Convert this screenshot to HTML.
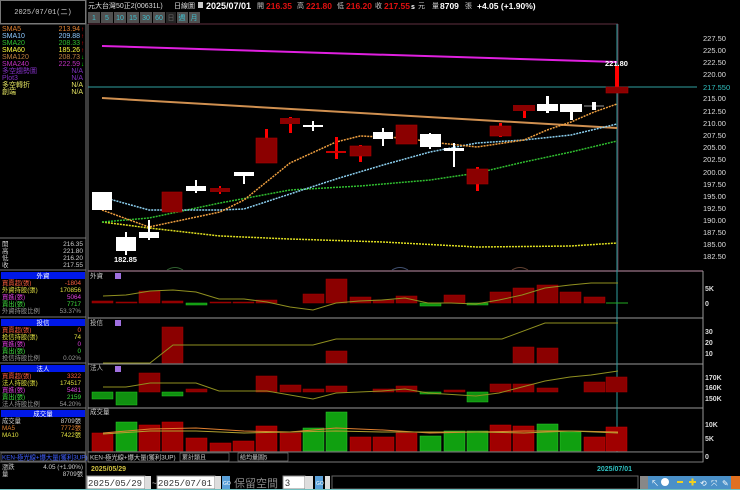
<!DOCTYPE html><html><head><meta charset="utf-8"><style>
body{margin:0;background:#000;width:740px;height:490px;overflow:hidden}
svg{display:block}
text{font-family:"Liberation Sans","Noto Sans CJK TC",sans-serif}
.s{font-size:7px}
.m{font-family:"Liberation Mono","Noto Sans CJK TC",monospace}
</style></head><body>
<svg width="740" height="490" viewBox="0 0 740 490" xmlns="http://www.w3.org/2000/svg">
<rect width="740" height="490" fill="#000"/>
<!-- left panel -->
<rect x="0.5" y="0.5" width="85" height="23" fill="#000" stroke="#777"/>
<text x="43" y="14" fill="#ccc" font-size="7" text-anchor="middle" class="m">2025/07/01(二)</text>
<line x1="86" y1="0" x2="86" y2="490" stroke="#777"/>
<line x1="0" y1="24" x2="86" y2="24" stroke="#777"/>
<g class="s m" font-size="6.5">
<text x="2" y="31" fill="#e08030">SMA5</text><text x="80" y="31" fill="#e08030" text-anchor="end">213.94</text>
<text x="2" y="38" fill="#8cc8ff">SMA10</text><text x="80" y="38" fill="#8cc8ff" text-anchor="end">209.88</text>
<text x="2" y="45" fill="#30c030">SMA20</text><text x="80" y="45" fill="#30c030" text-anchor="end">208.33</text>
<text x="2" y="52" fill="#ffff40">SMA60</text><text x="80" y="52" fill="#ffff40" text-anchor="end">185.26</text>
<text x="2" y="59" fill="#c08040">SMA120</text><text x="80" y="59" fill="#c08040" text-anchor="end">208.73</text>
<text x="2" y="66" fill="#c030c0">SMA240</text><text x="80" y="66" fill="#c030c0" text-anchor="end">222.59</text>
<text x="2" y="73" fill="#8030c0">多空趨勢圖</text><text x="83" y="73" fill="#8030c0" text-anchor="end">N/A</text>
<text x="2" y="80" fill="#8030c0">Plot3</text><text x="83" y="80" fill="#8030c0" text-anchor="end">N/A</text>
<text x="2" y="87" fill="#e0e060">多空轉折</text><text x="83" y="87" fill="#e0e060" text-anchor="end">N/A</text>
<text x="2" y="94" fill="#e0e060">創端</text><text x="83" y="94" fill="#e0e060" text-anchor="end">N/A</text>
</g>
<g fill="#f00" font-size="6"><text x="81" y="31">↑</text><text x="81" y="38">↑</text><text x="81" y="45">↑</text><text x="81" y="52">↑</text></g>
<g fill="#0f0" font-size="6"><text x="81" y="59">↓</text><text x="81" y="66">↓</text></g>
<line x1="0" y1="238" x2="86" y2="238" stroke="#777"/>
<g class="m" font-size="6.5" fill="#ccc">
<text x="2" y="246">開</text><text x="83" y="246" text-anchor="end">216.35</text>
<text x="2" y="253">高</text><text x="83" y="253" text-anchor="end">221.80</text>
<text x="2" y="260">低</text><text x="83" y="260" text-anchor="end">216.20</text>
<text x="2" y="267">收</text><text x="83" y="267" text-anchor="end">217.55</text>
</g>
<line x1="0" y1="270" x2="86" y2="270" stroke="#777"/>
<!-- 外資 -->
<rect x="1" y="272" width="84" height="7" fill="#0018e8"/><text x="43" y="278" fill="#fff" font-size="6.5" text-anchor="middle">外資</text>
<g class="m" font-size="6.3">
<text x="2" y="285" fill="#ff6040">買賣超(張)</text><text x="81" y="285" fill="#ff6040" text-anchor="end">-1804</text>
<text x="2" y="292" fill="#e0e040">外資持股(張)</text><text x="81" y="292" fill="#e0e040" text-anchor="end">170856</text>
<text x="2" y="299" fill="#e040e0">買進(張)</text><text x="81" y="299" fill="#e040e0" text-anchor="end">5064</text>
<text x="2" y="306" fill="#40e040">賣出(張)</text><text x="81" y="306" fill="#40e040" text-anchor="end">7717</text>
<text x="2" y="313" fill="#999">外資持股比例</text><text x="81" y="313" fill="#999" text-anchor="end">53.37%</text>
</g>
<line x1="0" y1="317" x2="86" y2="317" stroke="#777"/>
<rect x="1" y="319" width="84" height="7" fill="#0018e8"/><text x="43" y="325" fill="#fff" font-size="6.5" text-anchor="middle">投信</text>
<g class="m" font-size="6.3">
<text x="2" y="332" fill="#ff6040">買賣超(張)</text><text x="81" y="332" fill="#ff6040" text-anchor="end">0</text>
<text x="2" y="339" fill="#e0e040">投信持股(張)</text><text x="81" y="339" fill="#e0e040" text-anchor="end">74</text>
<text x="2" y="346" fill="#e040e0">買進(張)</text><text x="81" y="346" fill="#e040e0" text-anchor="end">0</text>
<text x="2" y="353" fill="#40e040">賣出(張)</text><text x="81" y="353" fill="#40e040" text-anchor="end">0</text>
<text x="2" y="360" fill="#999">投信持股比例</text><text x="81" y="360" fill="#999" text-anchor="end">0.02%</text>
</g>
<line x1="0" y1="363" x2="86" y2="363" stroke="#777"/>
<rect x="1" y="365" width="84" height="7" fill="#0018e8"/><text x="43" y="371" fill="#fff" font-size="6.5" text-anchor="middle">法人</text>
<g class="m" font-size="6.3">
<text x="2" y="378" fill="#ff6040">買賣超(張)</text><text x="81" y="378" fill="#ff6040" text-anchor="end">3322</text>
<text x="2" y="385" fill="#e0e040">法人持股(張)</text><text x="81" y="385" fill="#e0e040" text-anchor="end">174517</text>
<text x="2" y="392" fill="#e040e0">買進(張)</text><text x="81" y="392" fill="#e040e0" text-anchor="end">5481</text>
<text x="2" y="399" fill="#40e040">賣出(張)</text><text x="81" y="399" fill="#40e040" text-anchor="end">2159</text>
<text x="2" y="406" fill="#999">法人持股比例</text><text x="81" y="406" fill="#999" text-anchor="end">54.20%</text>
</g>
<line x1="0" y1="408" x2="86" y2="408" stroke="#777"/>
<rect x="1" y="410" width="84" height="7" fill="#0018e8"/><text x="43" y="416" fill="#fff" font-size="6.5" text-anchor="middle">成交量</text>
<g class="m" font-size="6.3">
<text x="2" y="423" fill="#ccc">成交量</text><text x="81" y="423" fill="#ccc" text-anchor="end">8709張</text>
<text x="2" y="430" fill="#e08030">MA5</text><text x="81" y="430" fill="#e08030" text-anchor="end">7772張</text>
<text x="2" y="437" fill="#e0e040">MA10</text><text x="81" y="437" fill="#e0e040" text-anchor="end">7422張</text>
</g>
<line x1="0" y1="452" x2="86" y2="452" stroke="#777"/>
<rect x="1" y="453" width="84" height="8" fill="#000" stroke="#888" stroke-width="0.6"/>
<text x="2" y="459.5" fill="#4060ff" font-size="6.3">KEN-極光線+爆大量(獲利3UP)</text>
<line x1="0" y1="462" x2="86" y2="462" stroke="#777"/>
<g class="m" font-size="6.3" fill="#ccc">
<text x="2" y="469">漲跌</text><text x="83" y="469" text-anchor="end">4.05 (+1.90%)</text>
<text x="2" y="476">量</text><text x="83" y="476" text-anchor="end">8709張</text>
</g>

<!-- header -->
<g font-size="7">
<text x="88" y="8" fill="#ddd">元大台灣50正2(00631L)</text>
<text x="174" y="8" fill="#ddd">日線圖</text>
<rect x="198" y="2" width="5" height="6" fill="#ccc"/>
<text x="206" y="9" fill="#fff" font-size="9" font-weight="bold">2025/07/01</text>
<text x="257" y="8" fill="#ccc">開</text><text x="266" y="9" fill="#e01010" font-size="8.5" font-weight="bold">216.35</text>
<text x="297" y="8" fill="#ccc">高</text><text x="306" y="9" fill="#e01010" font-size="8.5" font-weight="bold">221.80</text>
<text x="337" y="8" fill="#ccc">低</text><text x="346" y="9" fill="#e01010" font-size="8.5" font-weight="bold">216.20</text>
<text x="375" y="8" fill="#ccc">收</text><text x="384" y="9" fill="#e01010" font-size="8.5" font-weight="bold">217.55</text>
<text x="411" y="9" fill="#fff" font-weight="bold">s</text><text x="418" y="8" fill="#ccc">元</text>
<text x="432" y="8" fill="#ccc">量</text><text x="440" y="9" fill="#fff" font-size="8.5" font-weight="bold">8709</text><text x="465" y="8" fill="#ccc">張</text>
<text x="477" y="9" fill="#fff" font-size="8.5" font-weight="bold">+4.05 (+1.90%)</text>
</g>
<!-- period buttons -->
<g font-size="7" fill="#40c0d0" text-anchor="middle">
<rect x="88" y="12" width="12" height="11" fill="#505050"/><text x="94" y="20">1</text>
<rect x="101" y="12" width="12" height="11" fill="#505050"/><text x="107" y="20">5</text>
<rect x="114" y="12" width="12" height="11" fill="#505050"/><text x="120" y="20">10</text>
<rect x="127" y="12" width="12" height="11" fill="#505050"/><text x="133" y="20">15</text>
<rect x="140" y="12" width="12" height="11" fill="#505050"/><text x="146" y="20">30</text>
<rect x="153" y="12" width="12" height="11" fill="#505050"/><text x="159" y="20">60</text>
<rect x="166" y="12" width="10" height="11" fill="#252525"/><text x="171" y="20" fill="#666">日</text>
<rect x="177" y="12" width="11" height="11" fill="#505050"/><text x="182" y="20">週</text>
<rect x="189" y="12" width="11" height="11" fill="#505050"/><text x="194" y="20">月</text>
</g>

<!-- main chart frame -->
<line x1="88" y1="24" x2="618" y2="24" stroke="#603040"/>
<line x1="88" y1="24" x2="88" y2="452" stroke="#777"/>
<line x1="618" y1="24" x2="618" y2="270" stroke="#603040"/>
<line x1="88" y1="271" x2="703" y2="271" stroke="#806070" stroke-width="1.5"/>
<line x1="88" y1="318" x2="703" y2="318" stroke="#999"/>
<line x1="88" y1="364" x2="703" y2="364" stroke="#999"/>
<line x1="88" y1="408" x2="703" y2="408" stroke="#999"/>
<line x1="88" y1="452" x2="703" y2="452" stroke="#999"/>
<line x1="703" y1="271" x2="703" y2="462" stroke="#999"/>
<line x1="88" y1="87" x2="697" y2="87" stroke="#30a0a0"/>
<line x1="617" y1="24" x2="617" y2="462" stroke="#30a0a0"/>

<!-- price axis -->
<g font-size="7.5" fill="#ddd" class="m">
<text x="703" y="41">227.50</text><text x="703" y="53">225.00</text><text x="703" y="65">222.50</text><text x="703" y="77">220.00</text>
<text x="703" y="101">215.00</text><text x="703" y="114">212.50</text><text x="703" y="126">210.00</text><text x="703" y="138">207.50</text>
<text x="703" y="150">205.00</text><text x="703" y="162">202.50</text><text x="703" y="175">200.00</text><text x="703" y="187">197.50</text>
<text x="703" y="199">195.00</text><text x="703" y="211">192.50</text><text x="703" y="223">190.00</text><text x="703" y="235">187.50</text>
<text x="703" y="247">185.00</text><text x="703" y="259">182.50</text>
<text x="703" y="90" fill="#30c0c0">217.550</text>
</g>

<!-- MA lines -->
<polyline points="102,46 617,62" stroke="#e020e0" stroke-width="2" fill="none"/>
<polyline points="102,98 617,128" stroke="#d09050" stroke-width="2" fill="none"/>
<polyline points="102,222 149,228 220,236 290,239 383,242 477,247 571,246 617,243" stroke="#e0e020" stroke-width="1.5" stroke-dasharray="2,1" fill="none"/>
<polyline points="102,222 149,218 220,203 290,190 360,186 430,180 477,173 524,162 571,152 617,141" stroke="#30c030" stroke-width="1.5" stroke-dasharray="2,1" fill="none"/>
<polyline points="102,197 149,210 220,210 244,209 290,194 336,179 383,165 430,152 477,143 524,140 571,135 617,124" stroke="#8cd0f0" stroke-width="1.5" stroke-dasharray="2,1" fill="none"/>
<polyline points="102,210 149,227 220,212 244,200 290,163 336,142 360,136 406,138 430,142 477,147 524,140 547,130 571,122 594,112 617,104" stroke="#f0a040" stroke-width="1.5" stroke-dasharray="2,1" fill="none"/>

<!-- candles -->
<g>
<rect x="92" y="192" width="20" height="18" fill="#fff"/>
<rect x="125" y="232" width="2" height="23" fill="#fff"/><rect x="116" y="237" width="20" height="14" fill="#fff"/>
<rect x="148" y="220" width="2" height="20" fill="#fff"/><rect x="139" y="232" width="20" height="6" fill="#fff"/>
<rect x="162" y="192" width="20" height="20" fill="#8b0000" stroke="#a00" stroke-width="0.6"/>
<rect x="195" y="180" width="2" height="13" fill="#fff"/><rect x="186" y="186" width="20" height="5" fill="#fff"/>
<rect x="219" y="186" width="2" height="8" fill="#f00"/><rect x="210" y="188" width="20" height="4" fill="#8b0000"/>
<rect x="243" y="172" width="2" height="12" fill="#fff"/><rect x="234" y="172" width="20" height="4" fill="#fff"/>
<rect x="265" y="129" width="3" height="10" fill="#f00"/><rect x="256" y="138" width="21" height="25" fill="#8b0000" stroke="#a00" stroke-width="0.6"/>
<rect x="289" y="117" width="3" height="16" fill="#f00"/><rect x="280" y="118" width="20" height="6" fill="#8b0000"/>
<rect x="312" y="121" width="2" height="10" fill="#fff"/><rect x="303" y="125" width="20" height="2" fill="#fff"/>
<rect x="335" y="137" width="3" height="22" fill="#f00"/><rect x="326" y="151" width="20" height="2" fill="#c00"/>
<rect x="359" y="145" width="3" height="17" fill="#f00"/><rect x="350" y="146" width="21" height="10" fill="#8b0000" stroke="#a00" stroke-width="0.6"/>
<rect x="382" y="128" width="2" height="18" fill="#fff"/><rect x="373" y="132" width="20" height="7" fill="#fff"/>
<rect x="396" y="125" width="21" height="19" fill="#8b0000" stroke="#a00" stroke-width="0.6"/>
<rect x="429" y="133" width="2" height="16" fill="#fff"/><rect x="420" y="134" width="21" height="13" fill="#fff"/>
<rect x="453" y="143" width="2" height="24" fill="#fff"/><rect x="444" y="148" width="20" height="3" fill="#fff"/>
<rect x="476" y="167" width="3" height="24" fill="#f00"/><rect x="467" y="169" width="21" height="15" fill="#8b0000" stroke="#a00" stroke-width="0.6"/>
<rect x="499" y="123" width="3" height="14" fill="#f00"/><rect x="490" y="126" width="21" height="10" fill="#8b0000" stroke="#a00" stroke-width="0.6"/>
<rect x="523" y="105" width="3" height="13" fill="#f00"/><rect x="513" y="105" width="22" height="6" fill="#8b0000"/>
<rect x="546" y="96" width="3" height="17" fill="#fff"/><rect x="537" y="104" width="21" height="7" fill="#fff"/>
<rect x="570" y="104" width="3" height="16" fill="#fff"/><rect x="560" y="104" width="22" height="8" fill="#fff"/>
<line x1="584" y1="106" x2="604" y2="106" stroke="#999"/><rect x="592" y="102" width="4" height="8" fill="#fff"/>
<rect x="615" y="66" width="4" height="22" fill="#f00"/><rect x="606" y="87" width="22" height="6" fill="#8b0000" stroke="#a00" stroke-width="0.6"/>
</g>
<text x="114" y="262" fill="#fff" font-size="7.5" font-weight="bold">182.85</text>
<text x="605" y="66" fill="#fff" font-size="7.5" font-weight="bold">221.80</text>
<g fill="none" stroke-width="1"><path d="M167,270 Q175,265 183,270" stroke="#306030"/><path d="M392,270 Q400,265 408,270" stroke="#405070"/><path d="M512,270 Q520,265 528,270" stroke="#604030"/></g>

<!-- sub panel labels -->
<g font-size="6.5" fill="#ccc">
<text x="90" y="278">外資</text><rect x="115" y="273" width="6" height="6" fill="#a070e0"/>
<text x="90" y="325">投信</text><rect x="115" y="320" width="6" height="6" fill="#a070e0"/>
<text x="90" y="370">法人</text><rect x="115" y="366" width="6" height="6" fill="#a070e0"/>
<text x="90" y="414">成交量</text>
</g>
<!-- 外資 bars base 303 -->
<g fill="#8b0000" stroke="#a00" stroke-width="0.5">
<rect x="92" y="301" width="21" height="2"/><rect x="116" y="302" width="21" height="1"/><rect x="139" y="291" width="21" height="12"/>
<rect x="162" y="301" width="21" height="2"/><rect x="210" y="302" width="21" height="1"/><rect x="233" y="302" width="21" height="1"/>
<rect x="256" y="300" width="21" height="3"/><rect x="303" y="294" width="21" height="9"/><rect x="326" y="279" width="21" height="24"/>
<rect x="350" y="297" width="21" height="6"/><rect x="373" y="300" width="21" height="3"/><rect x="396" y="296" width="21" height="7"/>
<rect x="444" y="295" width="21" height="8"/><rect x="490" y="292" width="21" height="11"/><rect x="513" y="288" width="21" height="15"/>
<rect x="537" y="285" width="21" height="18"/><rect x="560" y="292" width="21" height="11"/><rect x="584" y="297" width="21" height="6"/>
</g>
<g fill="#109010" stroke="#2c2" stroke-width="0.5">
<rect x="186" y="303" width="21" height="2"/><rect x="420" y="303" width="21" height="3"/><rect x="467" y="303" width="21" height="2"/>
</g>
<line x1="606" y1="303" x2="628" y2="303" stroke="#2a2"/>
<polyline points="103,296 126,295 150,291 173,290 196,292 219,299 244,299 267,302 290,307 313,310 336,303 359,301 382,300 405,298 428,303 451,303 476,304 499,300 522,295 545,288 570,285 591,283 618,283" fill="none" stroke="#909020" stroke-width="1"/>
<g font-size="7" fill="#ddd" font-weight="bold"><text x="705" y="291">5K</text><text x="705" y="306">0</text></g>

<!-- 投信 bars base 363 -->
<g fill="#8b0000" stroke="#a00" stroke-width="0.5">
<rect x="162" y="327" width="21" height="36"/><rect x="326" y="351" width="21" height="12"/><rect x="513" y="347" width="21" height="16"/><rect x="537" y="348" width="21" height="15"/>
</g>
<polyline points="103,363 150,363 173,345 313,345 336,339 502,339 545,323 618,323" fill="none" stroke="#909020"/>
<g font-size="7" fill="#ddd" font-weight="bold"><text x="705" y="334">30</text><text x="705" y="345">20</text><text x="705" y="356">10</text></g>

<!-- 法人 bars base 392 -->
<g fill="#8b0000" stroke="#a00" stroke-width="0.5">
<rect x="139" y="373" width="21" height="19"/><rect x="186" y="389" width="21" height="3"/><rect x="256" y="376" width="21" height="16"/>
<rect x="280" y="385" width="21" height="7"/><rect x="303" y="389" width="21" height="3"/><rect x="326" y="386" width="21" height="6"/>
<rect x="373" y="389" width="21" height="3"/><rect x="396" y="386" width="21" height="6"/><rect x="444" y="390" width="21" height="2"/>
<rect x="490" y="384" width="21" height="8"/><rect x="513" y="384" width="21" height="8"/><rect x="537" y="388" width="21" height="4"/>
<rect x="584" y="382" width="21" height="10"/><rect x="606" y="377" width="21" height="15"/>
</g>
<g fill="#109010" stroke="#2c2" stroke-width="0.5">
<rect x="92" y="392" width="21" height="7"/><rect x="116" y="392" width="21" height="13"/><rect x="162" y="392" width="21" height="4"/>
<rect x="420" y="392" width="21" height="2"/><rect x="467" y="392" width="21" height="10"/>
</g>
<polyline points="103,387 126,387 150,383 196,383 219,391 267,391 313,399 336,393 382,391 405,389 428,393 476,396 499,393 522,387 545,381 570,377 591,375 618,371" fill="none" stroke="#909020"/>
<g font-size="7" fill="#ddd" font-weight="bold"><text x="705" y="380">170K</text><text x="705" y="390">160K</text><text x="705" y="401">150K</text></g>

<!-- volume base 451 -->
<g stroke-width="0.5">
<rect x="92" y="433" width="21" height="18" fill="#a00000" stroke="#c00"/>
<rect x="116" y="422" width="21" height="29" fill="#10a010" stroke="#3c3"/>
<rect x="139" y="425" width="21" height="26" fill="#a00000" stroke="#c00"/>
<rect x="162" y="422" width="21" height="29" fill="#a00000" stroke="#c00"/>
<rect x="186" y="438" width="21" height="13" fill="#a00000" stroke="#c00"/>
<rect x="210" y="443" width="21" height="8" fill="#a00000" stroke="#c00"/>
<rect x="233" y="441" width="21" height="10" fill="#a00000" stroke="#c00"/>
<rect x="256" y="426" width="21" height="25" fill="#a00000" stroke="#c00"/>
<rect x="280" y="433" width="21" height="18" fill="#a00000" stroke="#c00"/>
<rect x="303" y="428" width="21" height="23" fill="#10a010" stroke="#3c3"/>
<rect x="326" y="412" width="21" height="39" fill="#10a010" stroke="#3c3"/>
<rect x="350" y="437" width="21" height="14" fill="#a00000" stroke="#c00"/>
<rect x="373" y="437" width="21" height="14" fill="#a00000" stroke="#c00"/>
<rect x="396" y="433" width="21" height="18" fill="#a00000" stroke="#c00"/>
<rect x="420" y="436" width="21" height="15" fill="#10a010" stroke="#3c3"/>
<rect x="444" y="431" width="21" height="20" fill="#10a010" stroke="#3c3"/>
<rect x="467" y="431" width="21" height="20" fill="#10a010" stroke="#3c3"/>
<rect x="490" y="425" width="21" height="26" fill="#a00000" stroke="#c00"/>
<rect x="513" y="426" width="21" height="25" fill="#a00000" stroke="#c00"/>
<rect x="537" y="424" width="21" height="27" fill="#10a010" stroke="#3c3"/>
<rect x="560" y="432" width="21" height="19" fill="#10a010" stroke="#3c3"/>
<rect x="584" y="437" width="21" height="14" fill="#a00000" stroke="#c00"/>
<rect x="606" y="427" width="21" height="24" fill="#a00000" stroke="#c00"/>
</g>
<polyline points="103,433 150,429 196,428 244,431 290,432 336,428 383,430 430,433 477,432 524,431 571,431 618,432" fill="none" stroke="#e08030"/>
<polyline points="103,434 150,431 196,431 244,433 290,432 336,431 383,432 430,432 477,432 524,433 571,431 618,433" fill="none" stroke="#b0a030"/>
<g font-size="7" fill="#ddd" font-weight="bold"><text x="705" y="427">10K</text><text x="705" y="441">5K</text><text x="705" y="459">0</text></g>

<!-- bottom bar -->
<rect x="88" y="452" width="615" height="10" fill="#000" stroke="#999" stroke-width="0.8"/>
<text x="90" y="459.5" fill="#ccc" font-size="6.3">KEN-極光線+爆大量(獲利3UP)</text>
<rect x="180" y="453" width="49" height="8" fill="#000" stroke="#888" stroke-width="0.6"/><text x="182" y="459.5" fill="#ccc" font-size="6">累計類且</text>
<rect x="238" y="453" width="50" height="8" fill="#000" stroke="#888" stroke-width="0.6"/><text x="240" y="459.5" fill="#ccc" font-size="6">給均量圖5</text>
<text x="91" y="471" fill="#d0c040" font-size="7" font-weight="bold">2025/05/29</text>
<text x="597" y="471" fill="#30c0c0" font-size="7" font-weight="bold">2025/07/01</text>

<!-- controls -->
<rect x="87" y="476" width="58" height="13" fill="#fff" stroke="#888"/><text x="88" y="486" fill="#333" font-size="9" class="m">2025/05/29</text>
<rect x="145" y="476" width="6" height="13" fill="#ddd"/>
<text x="152" y="486" fill="#ccc" font-size="8">~</text>
<rect x="157" y="476" width="58" height="13" fill="#fff" stroke="#888"/><text x="158" y="486" fill="#333" font-size="9" class="m">2025/07/01</text>
<rect x="215" y="476" width="6" height="13" fill="#ddd"/>
<rect x="222" y="476" width="8" height="13" fill="#5aa0d8"/><text x="223" y="485" fill="#fff" font-size="5">GO</text>
<text x="234" y="487" fill="#888" font-size="11">保留空間</text>
<rect x="283" y="476" width="22" height="13" fill="#fff" stroke="#888"/><text x="285" y="486" fill="#333" font-size="9">3</text>
<rect x="305" y="476" width="8" height="13" fill="#ddd"/>
<rect x="315" y="476" width="8" height="13" fill="#5aa0d8"/><text x="316" y="485" fill="#fff" font-size="5">GO</text>
<rect x="325" y="476" width="5" height="13" fill="#ddd"/>
<rect x="332" y="476" width="306" height="13" fill="#000" stroke="#666"/>
<rect x="640" y="476" width="8" height="13" fill="#888"/>
<rect x="648" y="476" width="92" height="13" fill="#4a90c8"/>
<g fill="#fff" font-size="8"><text x="651" y="486">↖</text><circle cx="665" cy="482" r="4" fill="#fff"/><rect x="677" y="481" width="6" height="2" fill="#f0d020"/><rect x="689" y="481" width="7" height="2" fill="#f0d020"/><rect x="691.5" y="478.5" width="2" height="7" fill="#f0d020"/><text x="700" y="486">⟲</text><text x="711" y="486">⤧</text><text x="722" y="486">✎</text></g>
<rect x="731" y="476" width="9" height="13" fill="#e07020"/>
<rect x="0" y="489" width="740" height="1" fill="#70c0c0"/>
</svg>
</body></html>
